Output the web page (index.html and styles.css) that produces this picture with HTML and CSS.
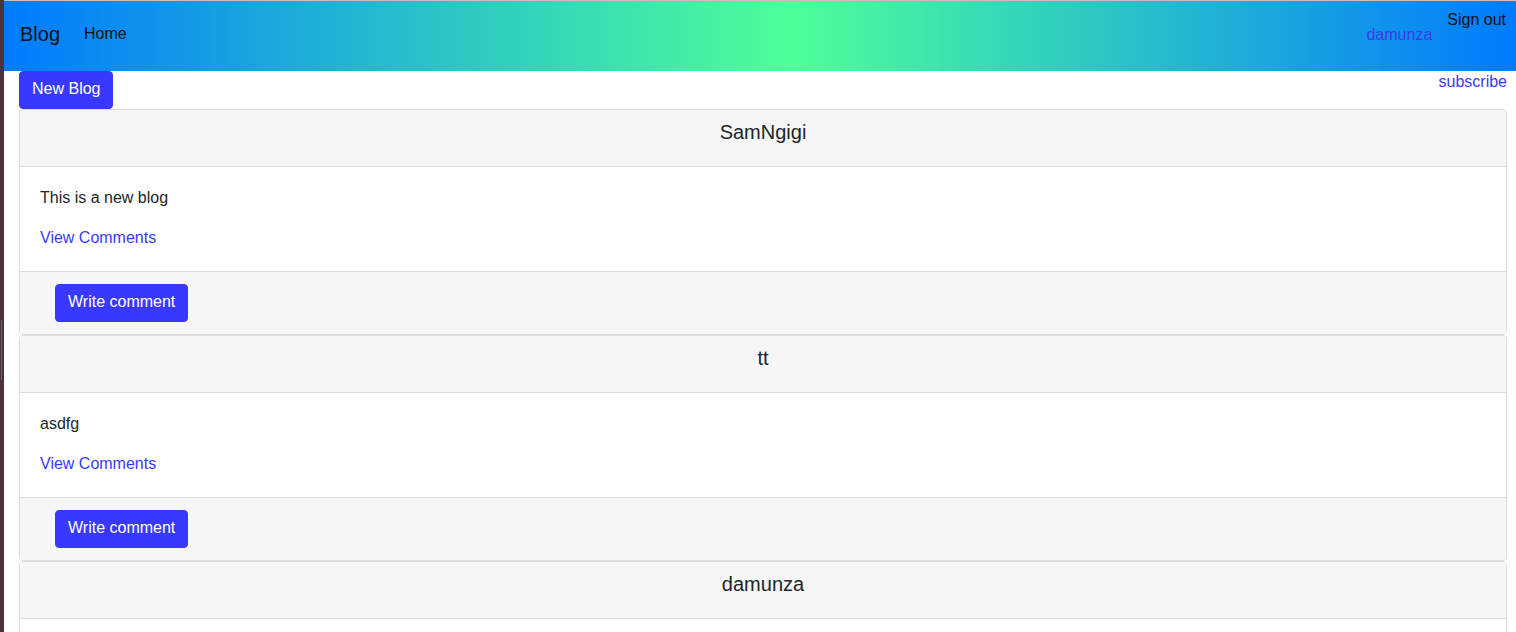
FILE: index.html
```html
<!DOCTYPE html>
<html lang="en">
<head>
<meta charset="utf-8">
<title>Blog</title>
<link rel="stylesheet" href="styles.css">
</head>
<body>
<div class="edge-mark"></div>
<nav class="navbar">
  <a class="brand" href="#">Blog</a>
  <a class="nav-link" href="#">Home</a>
  <div class="nav-right">
    <a class="user-link" href="#">damunza</a>
    <a class="signout" href="#">Sign out</a>
  </div>
</nav>
<main class="container">
  <div class="toolbar">
    <a class="btn" href="#">New Blog</a>
    <a class="link subscribe" href="#">subscribe</a>
  </div>

  <div class="card">
    <div class="card-header"><h5 class="card-title">SamNgigi</h5></div>
    <div class="card-body">
      <p class="card-text">This is a new blog</p>
      <a class="link" href="#">View Comments</a>
    </div>
    <div class="card-footer">
      <div class="footer-inner"><a class="btn" href="#">Write comment</a></div>
    </div>
  </div>

  <div class="card">
    <div class="card-header"><h5 class="card-title">tt</h5></div>
    <div class="card-body">
      <p class="card-text">asdfg</p>
      <a class="link" href="#">View Comments</a>
    </div>
    <div class="card-footer">
      <div class="footer-inner"><a class="btn" href="#">Write comment</a></div>
    </div>
  </div>

  <div class="card">
    <div class="card-header"><h5 class="card-title">damunza</h5></div>
    <div class="card-body"></div>
  </div>
</main>
</body>
</html>
```
FILE: styles.css
```css
* { box-sizing: border-box; }

html, body { height: 100%; }

body {
  margin: 0;
  border-left: 4px solid #4a3338;
  font-family: "Liberation Sans", Arial, sans-serif;
  font-size: 16px;
  line-height: 1.5;
  color: #212529;
  background: #fff;
  position: relative;
}

.edge-mark {
  position: fixed;
  left: 1px;
  top: 320px;
  width: 1px;
  height: 60px;
  background: #6e6064;
}

a { text-decoration: none; }

.navbar {
  display: flex;
  align-items: center;
  height: 71px;
  border-top: 1px solid #c4bfc0;
  padding: 0 10px 0 16px;
  background: linear-gradient(to right, #007bff 0%, #4dff98 52%, #007bff 100%);
}

.brand {
  font-size: 20px;
  line-height: 30px;
  color: #111;
  margin-right: 16px;
  padding-bottom: 4px;
}

.nav-link {
  padding: 6px 8px 8px;
  color: #111;
  margin-bottom: 2px;
}

.nav-right {
  margin-left: auto;
  display: flex;
  align-items: center;
  align-self: stretch;
  gap: 15px;
}

.user-link {
  color: #3b3be6;
  margin-bottom: 2px;
}

.signout {
  color: #111;
  align-self: flex-start;
  padding-top: 7px;
}

.container {
  margin: 0 9px 0 15px;
}

.toolbar {
  display: flex;
  justify-content: space-between;
  align-items: flex-start;
}

.subscribe { margin-top: -1px; }

.link { color: #3a3aff; }

.btn {
  display: inline-block;
  padding: 5px 12px 7px;
  line-height: 24px;
  border: 1px solid #3838ff;
  border-radius: 4px;
  background: #3838ff;
  color: #fff;
}

.card {
  border: 1px solid #dcdcdc;
  border-radius: 4px;
  background: #fff;
  overflow: hidden;
}

.card-header {
  height: 57px;
  padding: 10px 20px 14px;
  background: #f6f6f6;
  border-bottom: 1px solid #dcdcdc;
  text-align: center;
}

.card-title {
  margin: 0 0 8px;
  font-size: 20px;
  font-weight: 400;
  line-height: 24px;
}

.card-body {
  padding: 19px 20px 21px;
  height: 104px;
}

.card-text {
  margin: 0 0 16px;
}

.card-footer {
  padding: 12px 20px;
  height: 63px;
  background: #f6f6f6;
  border-top: 1px solid #dcdcdc;
}

.footer-inner {
  padding-left: 15px;
}
```
